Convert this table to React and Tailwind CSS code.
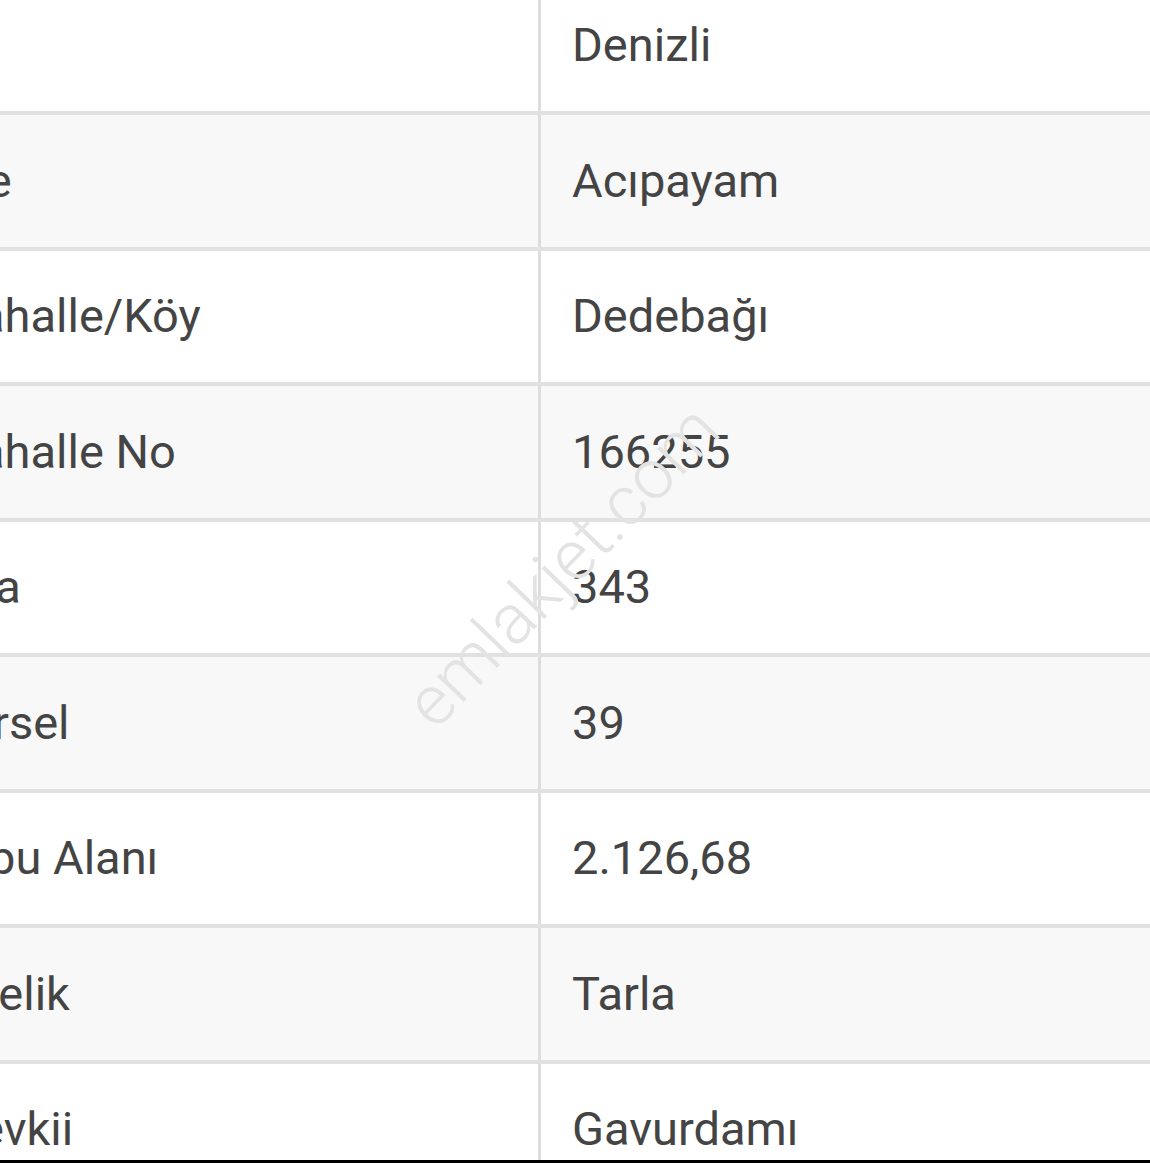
import React from 'react';

// Parsel bilgileri (sol sütun ekranda kırpılmış durumda)
const rows = [
  { label: 'İl', value: 'Denizli' },
  { label: 'İlçe', value: 'Acıpayam' },
  { label: 'Mahalle/Köy', value: 'Dedebağı' },
  { label: 'Mahalle No', value: '166255' },
  { label: 'Ada', value: '343' },
  { label: 'Parsel', value: '39' },
  { label: 'Tapu Alanı', value: '2.126,68' },
  { label: 'Nitelik', value: 'Tarla' },
  { label: 'Mevkii', value: 'Gavurdamı' },
];

const App = () => {
  return (
    <div className="w-[1150px] h-[1163px] flex flex-col bg-white overflow-hidden font-['Roboto',_'Noto_Sans',_sans-serif]">
      <div className="relative h-[1160px] overflow-hidden">
        <div className="mt-[-20.5px] ml-[-90px] w-[1300px]">
          {rows.map((row, i) => (
            <div
              key={row.label}
              className={`flex h-[135.5px] border-b-4 border-[#e1e1e1] ${i % 2 === 1 ? 'bg-[#f8f8f8]' : 'bg-white'}`}
            >
              <div className="w-[631px] shrink-0 flex items-center pl-[28px] border-r-[3px] border-[#dddddd] text-[47px] text-[#444444] whitespace-nowrap">
                {row.label}
              </div>
              <div className="flex-1 flex items-center pl-[31px] text-[47px] text-[#444444] whitespace-nowrap">
                {row.value}
              </div>
            </div>
          ))}
        </div>

        {/* watermark */}
        <div className="absolute left-[562px] top-[566px] pointer-events-none">
          <div className="-translate-x-1/2 -translate-y-1/2 -rotate-[46deg] text-[70px] font-light text-[#e3e3e3] whitespace-nowrap leading-none">
            emlakjet.com
          </div>
        </div>
      </div>
      <div className="h-[3px] bg-black" />
    </div>
  );
};

export default App;
